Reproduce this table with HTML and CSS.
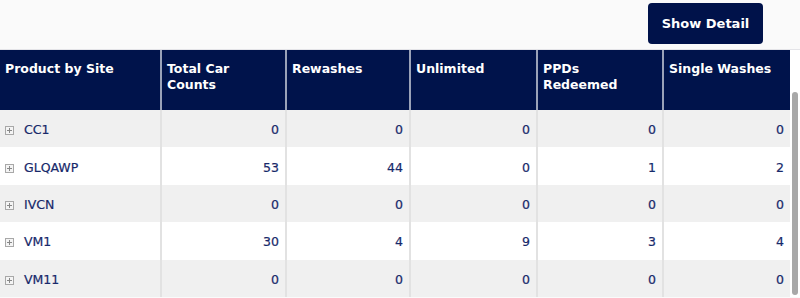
FILE: index.html
```html
<!DOCTYPE html>
<html>
<head>
<meta charset="utf-8">
<link rel="stylesheet" href="styles.css">
</head>
<body>
<div class="page">
  <div class="toolbar">
    <button class="btn">Show Detail</button>
  </div>
  <div class="grid-wrap">
    <table class="grid">
      <colgroup>
        <col style="width:161px"><col style="width:125px"><col style="width:124px"><col style="width:127px"><col style="width:126px"><col>
      </colgroup>
      <thead>
        <tr>
          <th>Product by Site</th>
          <th>Total Car<br>Counts</th>
          <th>Rewashes</th>
          <th>Unlimited</th>
          <th>PPDs<br>Redeemed</th>
          <th>Single Washes</th>
        </tr>
      </thead>
      <tbody>
        <tr class="alt"><td class="name"><span class="exp"></span>CC1</td><td>0</td><td>0</td><td>0</td><td>0</td><td>0</td></tr>
        <tr><td class="name"><span class="exp"></span>GLQAWP</td><td>53</td><td>44</td><td>0</td><td>1</td><td>2</td></tr>
        <tr class="alt"><td class="name"><span class="exp"></span>IVCN</td><td>0</td><td>0</td><td>0</td><td>0</td><td>0</td></tr>
        <tr><td class="name"><span class="exp"></span>VM1</td><td>30</td><td>4</td><td>9</td><td>3</td><td>4</td></tr>
        <tr class="alt"><td class="name"><span class="exp"></span>VM11</td><td>0</td><td>0</td><td>0</td><td>0</td><td>0</td></tr>
      </tbody>
    </table>
    <div class="scroll"><div class="thumb"></div></div>
  </div>
</div>
</body>
</html>
```

FILE: styles.css
```css
html, body {
  margin: 0;
  padding: 0;
  background: #fafafa;
  font-family: "DejaVu Sans", Verdana, sans-serif;
}
.page {
  width: 800px;
  height: 298px;
  overflow: hidden;
}
.toolbar {
  display: flex;
  justify-content: flex-end;
  padding: 3px 37px 0 0;
  height: 47px;
  box-sizing: border-box;
}
.btn {
  background: #00124a;
  color: #fff;
  border: 0;
  border-radius: 4px;
  width: 115px;
  height: 41px;
  font-family: inherit;
  font-weight: bold;
  font-size: 13px;
  padding: 0;
}
.grid-wrap {
  display: flex;
  align-items: flex-start;
  border-top: 1px solid #e4e4e8;
  margin-top: 2px;
}
.grid {
  width: 790px;
  border-collapse: collapse;
  table-layout: fixed;
  font-size: 12.5px;
}
.grid th {
  background: #00134b;
  color: #fff;
  text-align: left;
  vertical-align: top;
  font-weight: bold;
  padding: 11px 5px 0 5px;
  height: 60px;
  box-sizing: border-box;
  line-height: 16px;
  border-left: 2px solid #9aa2b8;
}
.grid th:first-child { border-left: 0; }
.grid tbody tr { height: 37.4px; }
.grid td {
  padding: 2px 6px 0 5px;
  line-height: 15px;
  text-align: right;
  color: #17296a;
  border-left: 2px solid #e2e2e2;
  background: #fff;
  -webkit-text-stroke: 0.2px #17296a;
}
.grid td:first-child { border-left: 0; }
.grid tr.alt td { background: #f0f0f0; }
.grid td.name {
  text-align: left;
  padding-left: 5px;
}
.exp {
  display: inline-block;
  width: 9px;
  height: 9px;
  box-sizing: border-box;
  border: 1px solid #a8a8a8;
  background:
    linear-gradient(#888, #888) center / 5px 1px no-repeat,
    linear-gradient(#888, #888) center / 1px 5px no-repeat,
    #f4f4f4;
  margin-right: 10px;
  vertical-align: -1px;
  -webkit-text-stroke: 0;
}
.scroll {
  width: 10px;
  align-self: stretch;
  background: #fff;
  padding: 42px 2px 0 2px;
  box-sizing: border-box;
}
.thumb {
  width: 6px;
  height: 203px;
  background: #a8a8a8;
  border-radius: 3px;
}
```
